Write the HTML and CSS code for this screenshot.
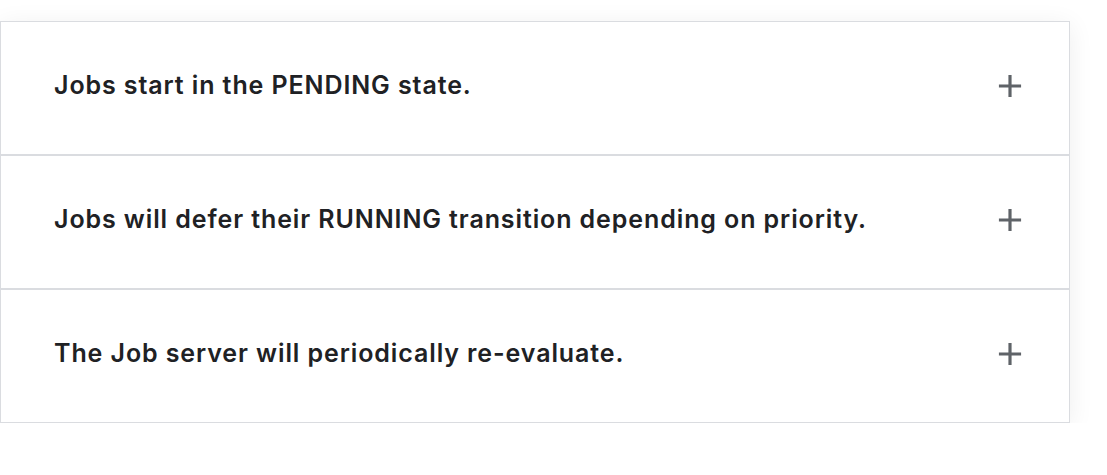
FILE: index.html
```html
<!DOCTYPE html>
<html lang="en">
<head>
<meta charset="utf-8">
<title>Jobs</title>
<link rel="stylesheet" href="styles.css">
</head>
<body>
<div class="accordion">
  <div class="item">
    <span class="title">Jobs start in the PENDING state.</span>
    <svg class="plus" viewBox="0 0 24 24" width="38" height="38"><path d="M19 13h-6v6h-2v-6H5v-2h6V5h2v6h6v2z"/></svg>
  </div>
  <div class="item">
    <span class="title">Jobs will defer their RUNNING transition depending on priority.</span>
    <svg class="plus" viewBox="0 0 24 24" width="38" height="38"><path d="M19 13h-6v6h-2v-6H5v-2h6V5h2v6h6v2z"/></svg>
  </div>
  <div class="item">
    <span class="title">The Job server will periodically re-evaluate.</span>
    <svg class="plus" viewBox="0 0 24 24" width="38" height="38"><path d="M19 13h-6v6h-2v-6H5v-2h6V5h2v6h6v2z"/></svg>
  </div>
</div>
</body>
</html>
```
FILE: styles.css
```css
html, body {
  margin: 0;
  padding: 0;
  background: #ffffff;
}
body {
  padding-top: 21px;
  font-family: Inter, "Open Sans", "Liberation Sans", sans-serif;
}
.accordion {
  width: 1070px;
  box-shadow: 0 4px 24px rgba(0, 0, 0, 0.07);
}
.item {
  box-sizing: border-box;
  height: 134px;
  border: 1px solid #dadce0;
  display: flex;
  align-items: center;
  justify-content: space-between;
  padding: 0 40px 0 53px;
}
.title {
  font-size: 25px;
  font-weight: 600;
  letter-spacing: 0.9px;
  color: #202124;
  margin-bottom: 7px;
}
.plus {
  fill: #5f6368;
  margin-bottom: 4px;
}
```
